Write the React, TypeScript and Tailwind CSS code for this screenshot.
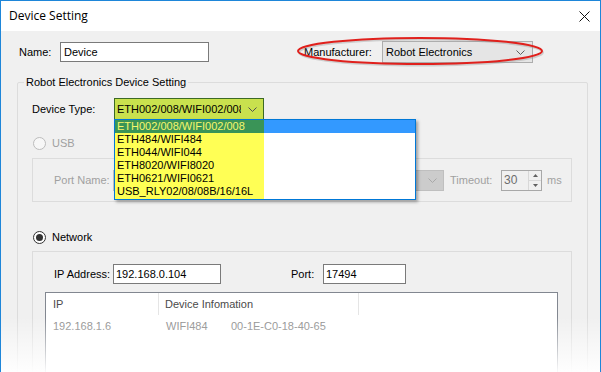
import React from "react";

const items = [
  "ETH002/008/WIFI002/008",
  "ETH484/WIFI484",
  "ETH044/WIFI044",
  "ETH8020/WIFI8020",
  "ETH0621/WIFI0621",
  "USB_RLY02/08/08B/16/16L",
];

function Chevron({ color = "#606060" }: { color?: string }) {
  return (
    <svg width="9" height="5" viewBox="0 0 9 5" className="shrink-0">
      <path d="M0.5 0.5 L4.5 4.5 L8.5 0.5" fill="none" stroke={color} strokeWidth="1" />
    </svg>
  );
}

function Radio({ checked, disabled }: { checked?: boolean; disabled?: boolean }) {
  return (
    <div
      className={`w-[13px] h-[13px] rounded-full border flex items-center justify-center shrink-0 ${
        disabled ? "border-[#bcbcbc] bg-[#f7f7f7]" : "border-[#333333] bg-white"
      }`}
    >
      {checked && <div className="w-[7px] h-[7px] rounded-full bg-[#333333]" />}
    </div>
  );
}

function DeviceDropdown() {
  return (
    <div className="absolute left-0 top-[21px] w-[302px] h-[81px] border border-[#0078d7] bg-white shadow-[2px_2px_3px_rgba(0,0,0,0.35)] z-10">
      {items.map((item, i) => (
        <div key={item} className={`flex h-[13px] leading-[13px] ${i === 0 ? "bg-[#3399ff]" : "bg-white"}`}>
          <div
            className={`w-[149px] pl-[2px] whitespace-nowrap ${
              i === 0 ? "bg-[#3a9457] text-[#f6f66c]" : "bg-[#ffff55] text-black"
            }`}
          >
            {item}
          </div>
        </div>
      ))}
      <div className="w-[149px] h-[1px] bg-[#ffff55]" />
    </div>
  );
}

export default function App() {
  return (
    <div className="relative w-[601px] h-[372px] overflow-hidden bg-white border-x border-t border-[#1e86d9] font-['Liberation_Sans',Arial,sans-serif] text-[11px] text-black">
      <div className="h-[30px] flex items-center justify-between pl-[8px] pr-[10px] bg-white">
        <span className="text-[12px] font-['Open_Sans',sans-serif] text-black">Device Setting</span>
        <svg width="11" height="11" viewBox="0 0 11 11">
          <path d="M0.5 0.5 L10.5 10.5 M10.5 0.5 L0.5 10.5" stroke="#111" strokeWidth="1" />
        </svg>
      </div>

      <div className="h-full bg-[#f0f0f0] pt-[10px] pl-[16px]">
        {/* name / manufacturer */}
        <div className="flex items-center h-[22px] pl-[2px]">
          <span className="w-[41px]">Name:</span>
          <div className="w-[149px] h-[20px] border border-[#7a7a7a] bg-white flex items-center px-[3px]">Device</div>
          <div className="relative flex items-center ml-[95px]">
            <span className="w-[78px]">Manufacturer:</span>
            <div className="w-[151px] h-[22px] border border-[#adadad] bg-[#e5e5e5] flex items-center justify-between pl-[3px] pr-[7px]">
              <span>Robot Electronics</span>
              <Chevron />
            </div>
            <svg width="252" height="32" viewBox="0 0 252 32" className="absolute left-[-9px] top-[-5px] pointer-events-none">
              <ellipse cx="125" cy="15" rx="122" ry="13" fill="none" stroke="#909090" strokeOpacity="0.35" strokeWidth="2" transform="translate(1 1.5)" />
              <ellipse cx="125" cy="15" rx="122" ry="13" fill="none" stroke="#e0201c" strokeWidth="2" />
            </svg>
          </div>
        </div>

        {/* main group */}
        <fieldset className="mt-[13px] w-[571px] h-[320px] border border-[#dcdcdc] rounded-[2px]">
          <legend className="ml-[6px] px-[2px] leading-[13px]">Robot Electronics Device Setting</legend>

          <div className="flex items-center h-[22px] mt-[9px] pl-[14px]">
            <span className="w-[82px]">Device Type:</span>
            <div className="relative">
              <div className="w-[150px] h-[22px] border border-[#3c6a24] bg-[#c9e14e] flex items-center justify-between pl-[2px] pr-[6px]">
                <span className="whitespace-nowrap overflow-hidden w-[124px]">ETH002/008/WIFI002/008</span>
                <Chevron color="#505050" />
              </div>
              <DeviceDropdown />
            </div>
          </div>

          {/* USB */}
          <div className="flex items-center h-[13px] mt-[17px] pl-[15px] gap-[6px] text-[#a0a0a0]">
            <Radio disabled />
            <span>USB</span>
          </div>
          <div className="ml-[14px] mt-[8px] w-[540px] h-[44px] border border-[#dcdcdc] flex items-center pl-[21px] text-[#a0a0a0]">
            <span className="w-[59px]">Port Name:</span>
            <div className="w-[331px] h-[21px] border border-[#bfbfbf] bg-[#cccccc] flex items-center justify-end pr-[6px]">
              <Chevron color="#a8a8a8" />
            </div>
            <span className="ml-[6px] w-[51px]">Timeout:</span>
            <div className="w-[41px] h-[21px] border border-[#a8a8a8] bg-[#f0f0f0] flex items-stretch">
              <span className="flex-1 pl-[2px] leading-[19px] text-[12px] text-[#6d6d6d]">30</span>
              <div className="w-[13px] flex flex-col border-l border-[#d8d8d8]">
                <div className="flex-1 flex items-center justify-center border-b border-[#d8d8d8]">
                  <svg width="5" height="3" viewBox="0 0 5 3"><path d="M0 3 L2.5 0 L5 3 Z" fill="#606060" /></svg>
                </div>
                <div className="flex-1 flex items-center justify-center">
                  <svg width="5" height="3" viewBox="0 0 5 3"><path d="M0 0 L2.5 3 L5 0 Z" fill="#606060" /></svg>
                </div>
              </div>
            </div>
            <span className="ml-[5px]">ms</span>
          </div>

          {/* Network */}
          <div className="flex items-center h-[13px] mt-[29px] pl-[15px] gap-[6px]">
            <Radio checked />
            <span>Network</span>
          </div>
          <div className="ml-[14px] mt-[7px] w-[540px] h-[200px] border border-[#dcdcdc] pt-[12px] pl-[21px]">
            <div className="flex items-center h-[20px]">
              <span className="w-[59px]">IP Address:</span>
              <div className="w-[108px] h-[20px] border border-[#7a7a7a] bg-white flex items-center px-[2px]">192.168.0.104</div>
              <span className="ml-[70px] w-[32px]">Port:</span>
              <div className="w-[83px] h-[20px] border border-[#7a7a7a] bg-white flex items-center px-[2px]">17494</div>
            </div>
            <div className="mt-[8px] ml-[-9px] w-[513px] h-[120px] border border-[#828790] bg-white">
              <div className="flex h-[22px] text-[#4a4a4a]">
                <div className="w-[113px] border-r border-[#e5e5e5] pl-[7px] flex items-center">IP</div>
                <div className="w-[200px] border-r border-[#e5e5e5] pl-[6px] flex items-center">Device Infomation</div>
              </div>
              <div className="flex items-center h-[22px] text-[#8a8a8a]">
                <span className="w-[113px] pl-[7px]">192.168.1.6</span>
                <span className="ml-[7px] w-[65px]">WIFI484</span>
                <span>00-1E-C0-18-40-65</span>
              </div>
            </div>
          </div>
        </fieldset>
      </div>

      <div className="absolute left-[-1px] right-[-1px] bottom-0 h-[55px] bg-linear-to-b from-white/0 to-white/95 pointer-events-none" />
    </div>
  );
}
